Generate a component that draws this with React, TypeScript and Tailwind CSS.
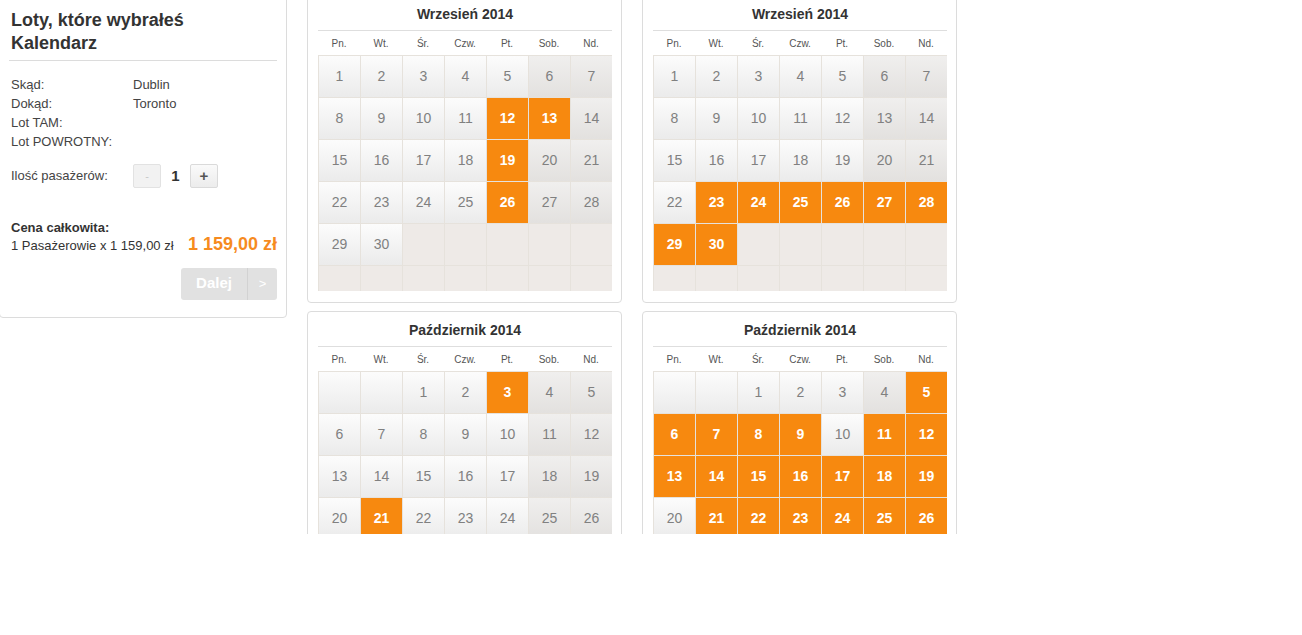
const DAYS = ["Pn.", "Wt.", "Śr.", "Czw.", "Pt.", "Sob.", "Nd."];

type Month = {
  title: string;
  offset: number;
  length: number;
  picked: number[];
};

const range = (a: number, b: number) => Array.from({ length: b - a + 1 }, (_, i) => a + i);

const months: Month[] = [
  { title: "Wrzesień 2014", offset: 0, length: 30, picked: [12, 13, 19, 26] },
  { title: "Wrzesień 2014", offset: 0, length: 30, picked: range(23, 30) },
  { title: "Październik 2014", offset: 2, length: 31, picked: [3, 21] },
  { title: "Październik 2014", offset: 2, length: 31, picked: [5, 6, 7, 8, 9, ...range(11, 19), ...range(21, 31)] },
];

function Cell({ day, col, picked, trailing }: { day?: number; col: number; picked: boolean; trailing: boolean }) {
  if (trailing) return <div className="h-[41px] bg-[#eeeae7]" />;
  if (picked)
    return (
      <div className="flex h-[41px] items-center justify-center bg-[#f7890f] text-[14px] font-bold text-white">
        {day}
      </div>
    );
  const weekend = col >= 5;
  return (
    <div
      className={
        weekend
          ? "flex h-[41px] items-center justify-center bg-linear-to-b from-[#f0efee] to-[#e3e1df] text-[14px] text-[#808080]"
          : "flex h-[41px] items-center justify-center bg-linear-to-b from-[#fcfcfc] to-[#ebebeb] text-[14px] text-[#808080]"
      }
    >
      {day}
    </div>
  );
}

function Calendar({ m }: { m: Month }) {
  const total = Math.ceil((m.offset + m.length) / 7) * 7;
  const cells = Array.from({ length: total }, (_, i) => {
    const day = i - m.offset + 1;
    const inMonth = day >= 1 && day <= m.length;
    return { day: inMonth ? day : undefined, trailing: day > m.length, picked: inMonth && m.picked.includes(day) };
  });

  return (
    <div className="w-[315px] rounded-[4px] border border-[#dcdcdc] bg-white pl-[10px] pr-[9px] pt-[8px] pb-[11px]">
      <div className="h-[20px] text-center text-[14px] leading-[20px] font-bold text-[#333]">{m.title}</div>
      <div className="mt-[6px] border-t border-[#dedede]" />
      <div className="grid h-[24px] grid-cols-7 items-center">
        {DAYS.map((d) => (
          <div key={d} className="text-center text-[10px] text-[#555]">
            {d}
          </div>
        ))}
      </div>
      <div className="grid grid-cols-7 gap-px border-l border-t border-[#e6e2dc] bg-[#e6e2dc]">
        {cells.map((c, i) => (
          <Cell key={i} day={c.day} col={i % 7} picked={c.picked} trailing={c.trailing} />
        ))}
        {DAYS.map((d) => (
          <div key={d} className="h-[25px] bg-[#eeeae7]" />
        ))}
      </div>
    </div>
  );
}

function Summary() {
  return (
    <div className="-ml-px w-[288px] rounded-[4px] border border-[#dcdcdc] bg-white px-[9px] pt-[13px] pb-[17px] text-[13px] text-[#444]">
      <h1 className="pl-[2px] text-[18px] leading-[23px] font-bold text-[#333]">
        Loty, które wybrałeś
        <br />
        Kalendarz
      </h1>
      <div className="mt-[5px] border-t border-[#dcdcdc]" />

      <div className="mt-[14px] grid grid-cols-[122px_1fr] pl-[2px] leading-[19px]">
        <span>Skąd:</span>
        <span>Dublin</span>
        <span>Dokąd:</span>
        <span>Toronto</span>
        <span>Lot TAM:</span>
        <span />
        <span>Lot POWROTNY:</span>
        <span />
      </div>

      <div className="mt-[13px] flex items-center pl-[2px]">
        <span className="w-[122px]">Ilość pasażerów:</span>
        <button className="flex h-[24px] w-[28px] items-center justify-center rounded-[2px] border border-[#e2e2e2] bg-[#f2f2f2] text-[11px] text-[#c8c8c8]">
          -
        </button>
        <span className="w-[29px] text-center text-[15px] font-bold text-[#333]">1</span>
        <button className="flex h-[24px] w-[28px] items-center justify-center rounded-[2px] border border-[#dadada] bg-linear-to-b from-[#fafafa] to-[#ececec] text-[15px] font-bold text-[#555]">
          +
        </button>
      </div>

      <div className="mt-[32px] pl-[2px] leading-[15px] font-bold text-[#333]">Cena całkowita:</div>
      <div className="-mt-[1px] flex items-baseline justify-between pl-[2px]">
        <span className="text-[#333]">1 Pasażerowie x 1 159,00 zł</span>
        <span className="text-[18px] leading-[20px] font-bold text-[#f68b1f]">1 159,00 zł</span>
      </div>

      <div className="mt-[12px] flex justify-end">
        <button className="flex h-[32px] w-[96px] items-center rounded-[3px] bg-[#e1e1e1] text-white">
          <span className="flex-1 text-center text-[15px] font-bold">Dalej</span>
          <span className="h-full border-l border-[#d2d2d2]" />
          <span className="w-[29px] text-center text-[13px]">&gt;</span>
        </button>
      </div>
    </div>
  );
}

export default function App() {
  return (
    <div className="h-[534px] overflow-hidden bg-white" style={{ fontFamily: '"Liberation Sans", Arial, sans-serif' }}>
      <div className="-mt-[5px] flex items-start gap-[20px]">
        <Summary />
        <div className="grid grid-cols-[315px_315px] gap-x-[20px] gap-y-[8px]">
          {months.map((m, i) => (
            <Calendar key={i} m={m} />
          ))}
        </div>
      </div>
    </div>
  );
}
